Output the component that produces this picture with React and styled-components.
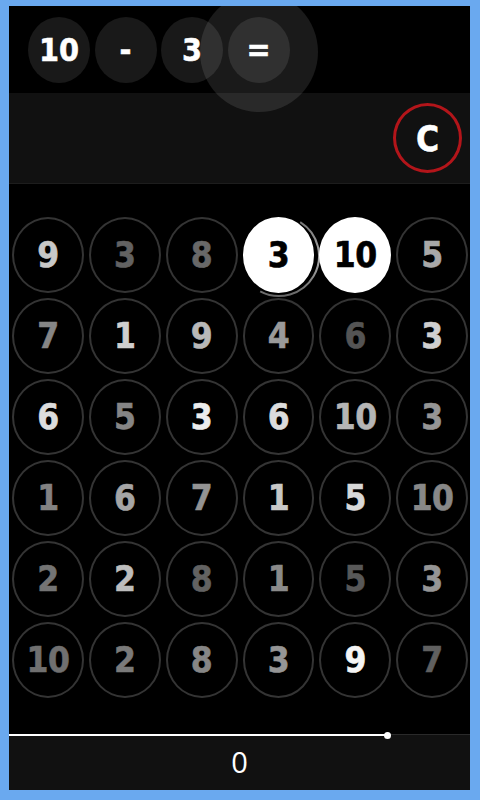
import React from "react";
import styled, { createGlobalStyle } from "styled-components";

const Global = createGlobalStyle`
  html, body { margin: 0; padding: 0; background: #6aa9ef; }
  body { font-family: "DejaVu Sans Condensed", "DejaVu Sans", sans-serif; }
`;

const Frame = styled.div`
  width: 480px;
  height: 800px;
  box-sizing: border-box;
  padding: 6px 10px 10px 9px;
  background: #6aa9ef;
`;

const Screen = styled.div`
  position: relative;
  overflow: hidden;
  height: 100%;
  display: flex;
  flex-direction: column;
  background: #000;
`;

const ExprBar = styled.div`
  height: 87px;
  flex: none;
  display: flex;
  align-items: center;
  gap: 4.5px;
  padding-left: 19px;
`;

const Token = styled.div`
  width: 62px;
  height: 66px;
  border-radius: 50%;
  background: #191919;
  color: #fff;
  display: flex;
  align-items: center;
  justify-content: center;
  font-weight: bold;
  font-size: 32px;
  line-height: 1;
  -webkit-text-stroke: 0.5px currentColor;
`;

const Ripple = styled.div`
  position: absolute;
  left: 191px;
  top: -14px;
  width: 118px;
  height: 120px;
  border-radius: 50%;
  background: rgba(255, 255, 255, 0.1);
  z-index: 5;
  pointer-events: none;
`;

const ClearBar = styled.div`
  height: 90px;
  flex: none;
  background: #111;
  border-bottom: 1px solid #1d1d1d;
  display: flex;
  align-items: center;
  justify-content: flex-end;
  padding-right: 8px;
`;

const ClearButton = styled.div`
  width: 69px;
  height: 70px;
  box-sizing: border-box;
  border-radius: 50%;
  border: 3px solid #b3151a;
  color: #fff;
  display: flex;
  align-items: center;
  justify-content: center;
  font-weight: bold;
  font-size: 35px;
  padding-top: 2px;
  -webkit-text-stroke: 0.5px currentColor;
`;

const Grid = styled.div`
  flex: 1;
  display: grid;
  grid-template-columns: repeat(6, 1fr);
  grid-auto-rows: 76px;
  column-gap: 5px;
  row-gap: 5px;
  padding: 33px 2px 0 3px;
  align-content: start;
`;

const Cell = styled.div`
  position: relative;
  box-sizing: border-box;
  border-radius: 50%;
  border: 2px solid ${(p) => (p.$selected ? "#fff" : "#343434")};
  background: ${(p) => (p.$selected ? "#fff" : "transparent")};
  color: ${(p) => (p.$selected ? "#000" : p.$tone)};
  display: flex;
  align-items: center;
  justify-content: center;
  font-weight: bold;
  font-size: 35px;
  line-height: 1;
  letter-spacing: -0.5px;
  -webkit-text-stroke: 0.6px currentColor;
`;

const ProgressRing = styled.svg`
  position: absolute;
  left: -8px;
  top: -5px;
  width: 84px;
  height: 84px;
  pointer-events: none;
`;

const Track = styled.div`
  position: relative;
  height: 1px;
  flex: none;
  background: #2a2a2a;
  z-index: 2;
`;

const TrackFill = styled.div`
  position: absolute;
  left: 0;
  top: 0;
  height: 2px;
  background: #fff;
`;

const Thumb = styled.div`
  position: absolute;
  top: -2px;
  width: 7px;
  height: 7px;
  margin-left: -3px;
  border-radius: 50%;
  background: #fff;
`;

const ResultBar = styled.div`
  height: 56px;
  flex: none;
  background: #111;
  margin-top: -1px;
  display: flex;
  align-items: center;
  justify-content: center;
  color: #fff;
  font-family: "Open Sans", "DejaVu Sans", sans-serif;
  font-size: 29px;
  padding-bottom: 2px;
  box-sizing: border-box;
`;

const rows = [
  [["9", "#c8c8c8"], ["3", "#626262"], ["8", "#686868"], ["3", "", 1], ["10", "", 2], ["5", "#a8a8a8"]],
  [["7", "#868686"], ["1", "#cfcfcf"], ["9", "#b8b8b8"], ["4", "#9a9a9a"], ["6", "#545454"], ["3", "#cfcfcf"]],
  [["6", "#dcdcdc"], ["5", "#858585"], ["3", "#ececec"], ["6", "#dcdcdc"], ["10", "#b5b5b5"], ["3", "#959595"]],
  [["1", "#828282"], ["6", "#a5a5a5"], ["7", "#939393"], ["1", "#c8c8c8"], ["5", "#d8d8d8"], ["10", "#888888"]],
  [["2", "#747474"], ["2", "#bdbdbd"], ["8", "#626262"], ["1", "#8a8a8a"], ["5", "#585858"], ["3", "#959595"]],
  [["10", "#707070"], ["2", "#7a7a7a"], ["8", "#868686"], ["3", "#959595"], ["9", "#f4f4f4"], ["7", "#606060"]],
];

function arcPath(cx, cy, r, a0, a1) {
  const p = (a) => {
    const rad = ((a - 90) * Math.PI) / 180;
    return [cx + r * Math.cos(rad), cy + r * Math.sin(rad)];
  };
  const [x0, y0] = p(a0);
  const [x1, y1] = p(a1);
  const large = a1 - a0 > 180 ? 1 : 0;
  return `M ${x0} ${y0} A ${r} ${r} 0 ${large} 1 ${x1} ${y1}`;
}

export default function App() {
  const progress = 378;
  return (
    <>
      <Global />
      <Frame>
        <Screen>
          <ExprBar>
            <Token>10</Token>
            <Token>-</Token>
            <Token>3</Token>
            <Token>=</Token>
          </ExprBar>
          <Ripple />
          <ClearBar>
            <ClearButton>C</ClearButton>
          </ClearBar>
          <Grid>
            {rows.flat().map(([v, tone, sel], i) => (
              <Cell key={i} $selected={!!sel} $tone={tone}>
                {v}
                {sel === 1 && (
                  <ProgressRing viewBox="0 0 84 84">
                    <defs>
                      <linearGradient id="rg" x1="0" y1="0" x2="0" y2="1">
                        <stop offset="0" stopColor="#777" />
                        <stop offset="0.5" stopColor="#aaa" />
                        <stop offset="1" stopColor="#666" />
                      </linearGradient>
                    </defs>
                    <path d={arcPath(42, 42, 40, 32, 208)} fill="none" stroke="url(#rg)" strokeWidth="2" />
                  </ProgressRing>
                )}
              </Cell>
            ))}
          </Grid>
          <Track>
            <TrackFill style={{ width: progress }} />
            <Thumb style={{ left: progress }} />
          </Track>
          <ResultBar>0</ResultBar>
        </Screen>
      </Frame>
    </>
  );
}
